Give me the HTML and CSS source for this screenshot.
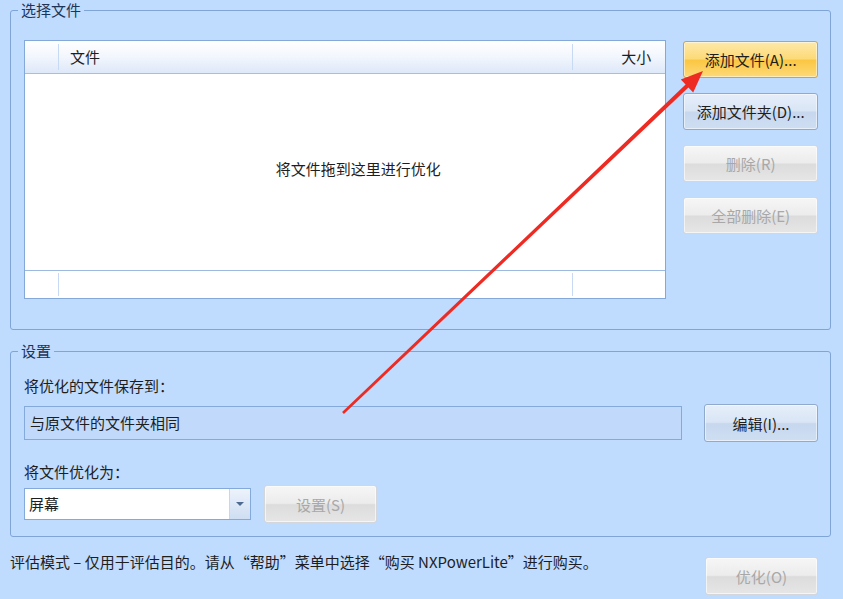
FILE: index.html
```html
<!DOCTYPE html>
<html lang="zh-CN">

<head>
  <meta charset="UTF-8" />
  <meta name="viewport" content="width=device-width, initial-scale=1" />
  <title>NXPowerLite</title>
  <link rel="stylesheet" href="styles.css">
</head>

<body>
  <div class="window">
    <fieldset class="group">
      <legend>选择文件</legend>
      <div class="files">
        <div class="list">
          <div class="list-head">
            <span class="col-icon"></span>
            <span class="col-name">文件</span>
            <span class="col-size">大小</span>
          </div>
          <div class="list-body">将文件拖到这里进行优化</div>
          <div class="list-foot">
            <span class="col-icon"></span>
            <span class="col-name"></span>
            <span class="col-size"></span>
          </div>
        </div>
        <div class="actions">
          <button class="btn hot">添加文件(A)...</button>
          <button class="btn">添加文件夹(D)...</button>
          <button class="btn" disabled>删除(R)</button>
          <button class="btn" disabled>全部删除(E)</button>
        </div>
      </div>
    </fieldset>

    <fieldset class="group settings">
      <legend>设置</legend>
      <div class="settings-body">
        <div class="label">将优化的文件保存到：</div>
        <div class="row">
          <div class="field">与原文件的文件夹相同</div>
          <button class="btn edit-btn">编辑(I)...</button>
        </div>
        <div class="label second">将文件优化为：</div>
        <div class="row">
          <div class="combo">
            <span class="combo-text">屏幕</span>
            <span class="combo-btn"><span class="caret"></span></span>
          </div>
          <button class="btn small-btn" disabled>设置(S)</button>
        </div>
      </div>
    </fieldset>

    <div class="status">
      <p>评估模式 – 仅用于评估目的。请从“帮助”菜单中选择“购买 NXPowerLite”进行购买。</p>
      <button class="btn small-btn" disabled>优化(O)</button>
    </div>
  </div>

  <!-- annotation arrow drawn over the dialog -->
  <svg class="arrow" width="843" height="599" viewBox="0 0 843 599">
    <polygon fill="#ee2b22"
      points="342.1,412.1 685.6,84.5 680.8,79.5 703,71 693.2,92.5 688.4,87.5 343.9,413.9" />
  </svg>
</body>

</html>
```

FILE: styles.css
```css
html,
body {
  margin: 0;
  padding: 0;
  background-color: #bfdbfe;
  font-family: "Noto Sans CJK SC", "Noto Sans", sans-serif;
  font-size: 15px;
  color: #1e1e1e;
}

.window {
  position: relative;
  width: 843px;
  height: 599px;
  padding: 0 12px 0 10px;
  box-sizing: border-box;
}

.group {
  margin: 0;
  padding: 0;
  border: 1px solid #7fa4d6;
  border-radius: 3px;
  min-width: 0;
}

.group legend {
  margin-left: 7px;
  padding: 0 3px;
  line-height: 20px;
  color: #1d3557;
}

.files {
  display: flex;
  gap: 17px;
  padding: 20px 12px 30px 13px;
}

/* file list */
.list {
  width: 642px;
  border: 1px solid #84a8d8;
  background: white;
  display: flex;
  flex-direction: column;
}

.list-head,
.list-foot {
  display: flex;
}

.list-head {
  height: 32px;
  border-bottom: 1px solid #a5bfe3;
  background: linear-gradient(#ffffff, #f2f6fd 50%, #dde8f9);
  line-height: 32px;
}

.col-icon {
  width: 33px;
}

.col-name {
  flex: 1;
  padding-left: 11px;
  border-left: 1px solid #c8daf3;
}

.col-size {
  width: 78px;
  padding-right: 14px;
  text-align: right;
  border-left: 1px solid #c8daf3;
}

.list-head span,
.list-foot span {
  margin: 3px 0;
  line-height: 26px;
}

.list-body {
  height: 196px;
  display: flex;
  align-items: center;
  justify-content: center;
  padding: 0 0 8px 26px;
  box-sizing: border-box;
}

.list-foot {
  height: 27px;
  border-top: 1px solid #9cb9e0;
}

.list-foot span {
  margin: 2px 0;
  line-height: 23px;
}

/* buttons */
.actions {
  display: flex;
  flex-direction: column;
  gap: 15px;
  width: 135px;
  padding-top: 1px;
}

.btn {
  height: 37px;
  border: 1px solid #90aacd;
  border-radius: 3px;
  background: linear-gradient(#e6eefa, #d9e5f5 48%, #c6d7ee 52%, #cfdef2);
  font-family: inherit;
  font-size: 15px;
  color: #1e1e1e;
  padding: 0;
  box-shadow: inset 0 0 0 1px rgba(255, 255, 255, 0.5);
}

.btn.hot {
  border-color: #c5a35e;
  background: linear-gradient(#fde9a8, #fdda78 48%, #fbc742 52%, #fdd978);
}

.btn:disabled {
  border-color: #d3d6da;
  background: linear-gradient(#f6f6f6, #ececec 48%, #dcdcdc 52%, #e6e6e6);
  color: #a8a8a8;
  box-shadow: inset 0 0 0 1px rgba(255, 255, 255, 0.6);
}

/* settings */
.settings {
  margin-top: 11px;
}

.settings-body {
  padding: 15px 12px 13px 13px;
}

.label {
  line-height: 20px;
  margin-bottom: 8px;
}

.label.second {
  margin-top: 20px;
  margin-bottom: 3px;
}

.row {
  display: flex;
  align-items: center;
}

.field {
  width: 658px;
  height: 34px;
  box-sizing: border-box;
  border: 1px solid #84a9db;
  background: #c1dafc;
  line-height: 32px;
  padding-left: 5px;
}

.edit-btn {
  width: 114px;
  height: 38px;
  margin-left: 22px;
}

.combo {
  width: 227px;
  height: 32px;
  box-sizing: border-box;
  border: 1px solid #84a9db;
  background: white;
  display: flex;
}

.combo-text {
  flex: 1;
  line-height: 30px;
  padding-left: 4px;
}

.combo-btn {
  width: 20px;
  border-left: 1px solid #c5d7ef;
  background: linear-gradient(#eef3fb, #dde8f7 50%, #cfdef3);
  display: flex;
  align-items: center;
  justify-content: center;
}

.caret {
  width: 0;
  height: 0;
  border-left: 4px solid transparent;
  border-right: 4px solid transparent;
  border-top: 4px solid #4e6a91;
}

.small-btn {
  width: 113px;
  height: 38px;
  margin-left: 13px;
}

/* bottom bar */
.status {
  display: flex;
  justify-content: space-between;
  align-items: flex-start;
  padding-right: 13px;
}

.status p {
  margin: 15px 0 0;
  line-height: 20px;
}

.status .small-btn {
  margin-top: 20px;
}

.arrow {
  position: absolute;
  left: 0;
  top: 0;
  pointer-events: none;
}
```
